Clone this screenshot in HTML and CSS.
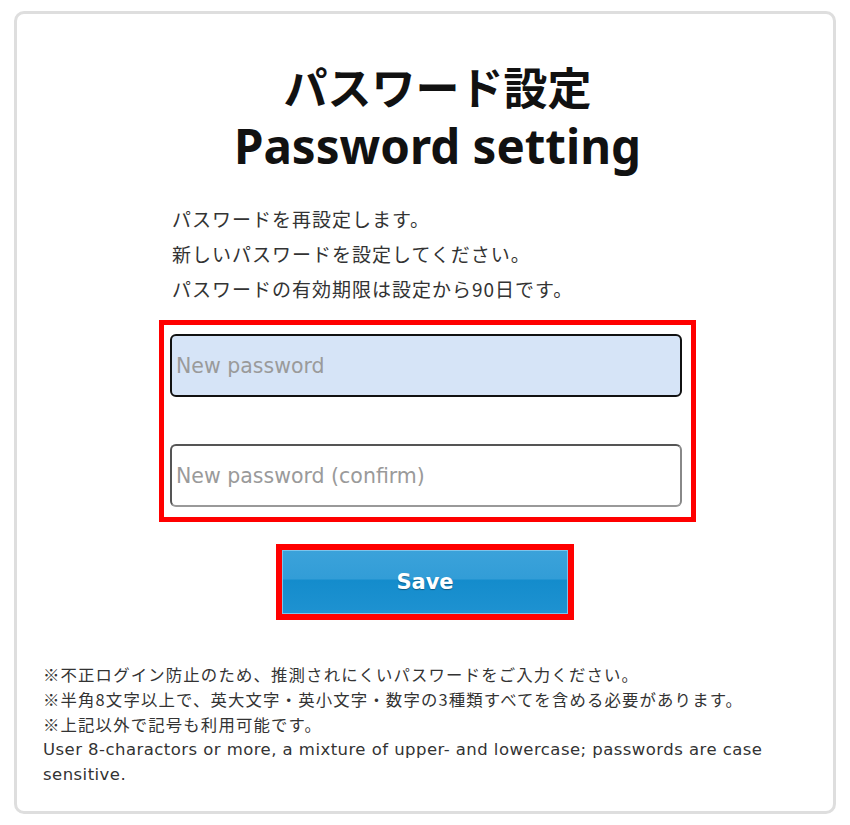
FILE: index.html
```html
<!DOCTYPE html>
<html lang="ja">
<head>
<meta charset="utf-8">
<title>Password setting</title>
<link rel="stylesheet" href="styles.css">
</head>
<body>
<div class="card">
  <h1 class="title"><span class="jp">パスワード設定</span><span class="en">Password setting</span></h1>
  <div class="intro">
    <p>パスワードを再設定します。</p>
    <p>新しいパスワードを設定してください。</p>
    <p>パスワードの有効期限は設定から90日です。</p>
  </div>
  <div class="fields">
    <input class="field focused" type="password" placeholder="New password">
    <input class="field" type="password" placeholder="New password (confirm)">
  </div>
  <div class="save-wrap">
    <button class="save" type="button">Save</button>
  </div>
  <div class="notes">
    <p class="jp">※不正ログイン防止のため、推測されにくいパスワードをご入力ください。</p>
    <p class="jp">※半角8文字以上で、英大文字・英小文字・数字の3種類すべてを含める必要があります。</p>
    <p class="jp">※上記以外で記号も利用可能です。</p>
    <p class="en">User 8-charactors or more, a mixture of upper- and lowercase; passwords are case sensitive.</p>
  </div>
</div>
</body>
</html>
```
FILE: styles.css
```css
html, body {
  margin: 0;
  padding: 0;
  background: #fff;
}
body {
  font-family: "DejaVu Sans", "Noto Sans CJK JP", sans-serif;
  color: #333;
}
.card {
  box-sizing: border-box;
  width: 822px;
  height: 803px;
  margin: 11px 0 0 14px;
  border: 3px solid #dedede;
  border-radius: 10px;
  display: flex;
  flex-direction: column;
}
.title {
  margin: 42px 0 0 0;
  padding-left: 25px;
  display: flex;
  flex-direction: column;
  align-items: center;
  font-family: "Noto Sans", "Noto Sans CJK JP", sans-serif;
  font-weight: bold;
  color: #111;
  font-size: 44px;
  line-height: 60px;
}
.title .jp {
  font-family: "Noto Sans CJK JP", sans-serif;
}
.title .en {
  font-size: 47.5px;
}
.intro {
  margin: 25px 0 0 155px;
  font-family: "Noto Sans CJK JP", sans-serif;
  font-size: 19px;
  letter-spacing: 1px;
  line-height: 35px;
}
.intro p, .notes p {
  margin: 0;
}
.fields {
  box-sizing: border-box;
  width: 537px;
  margin: 14px 0 0 142px;
  border: 5px solid #ff0000;
  padding: 9px 9px 10px 6px;
  display: flex;
  flex-direction: column;
  gap: 47px;
}
.field {
  box-sizing: border-box;
  width: 512px;
  height: 63px;
  border: 2px solid #222;
  border-radius: 6px;
  padding: 0 4px;
  font-family: "DejaVu Sans", sans-serif;
  font-size: 20.5px;
  background: #fff;
  outline: none;
}
.field.focused {
  background: #d6e4f7;
  border-color: #111;
}
.field::placeholder {
  color: #9a9a9a;
}
.field:not(.focused) {
  border-color: #555 #888 #999 #555;
}
.save-wrap {
  margin: 22px 0 0 259px;
  width: 298px;
  box-sizing: border-box;
  border: 6px solid #ff0000;
  padding: 0;
}
.save {
  display: block;
  width: 100%;
  height: 64px;
  border: 1px solid #7cc4ec;
  background: linear-gradient(#3ba2da 0%, #329dd7 45%, #148ccc 47%, #1e92d1 100%);
  color: #fff;
  font-family: "DejaVu Sans", "Noto Sans", sans-serif;
  font-weight: bold;
  font-size: 21px;
  text-shadow: 0 1px 1px rgba(0, 0, 0, 0.35);
}
.notes {
  margin: 42px 0 0 26px;
  line-height: 25px;
  width: 740px;
}
.notes .jp {
  font-family: "Noto Sans CJK JP", sans-serif;
  font-size: 16.4px;
  letter-spacing: 1.15px;
}
.notes .en {
  font-family: "DejaVu Sans", sans-serif;
  font-size: 16.5px;
  letter-spacing: 0.45px;
}
```
